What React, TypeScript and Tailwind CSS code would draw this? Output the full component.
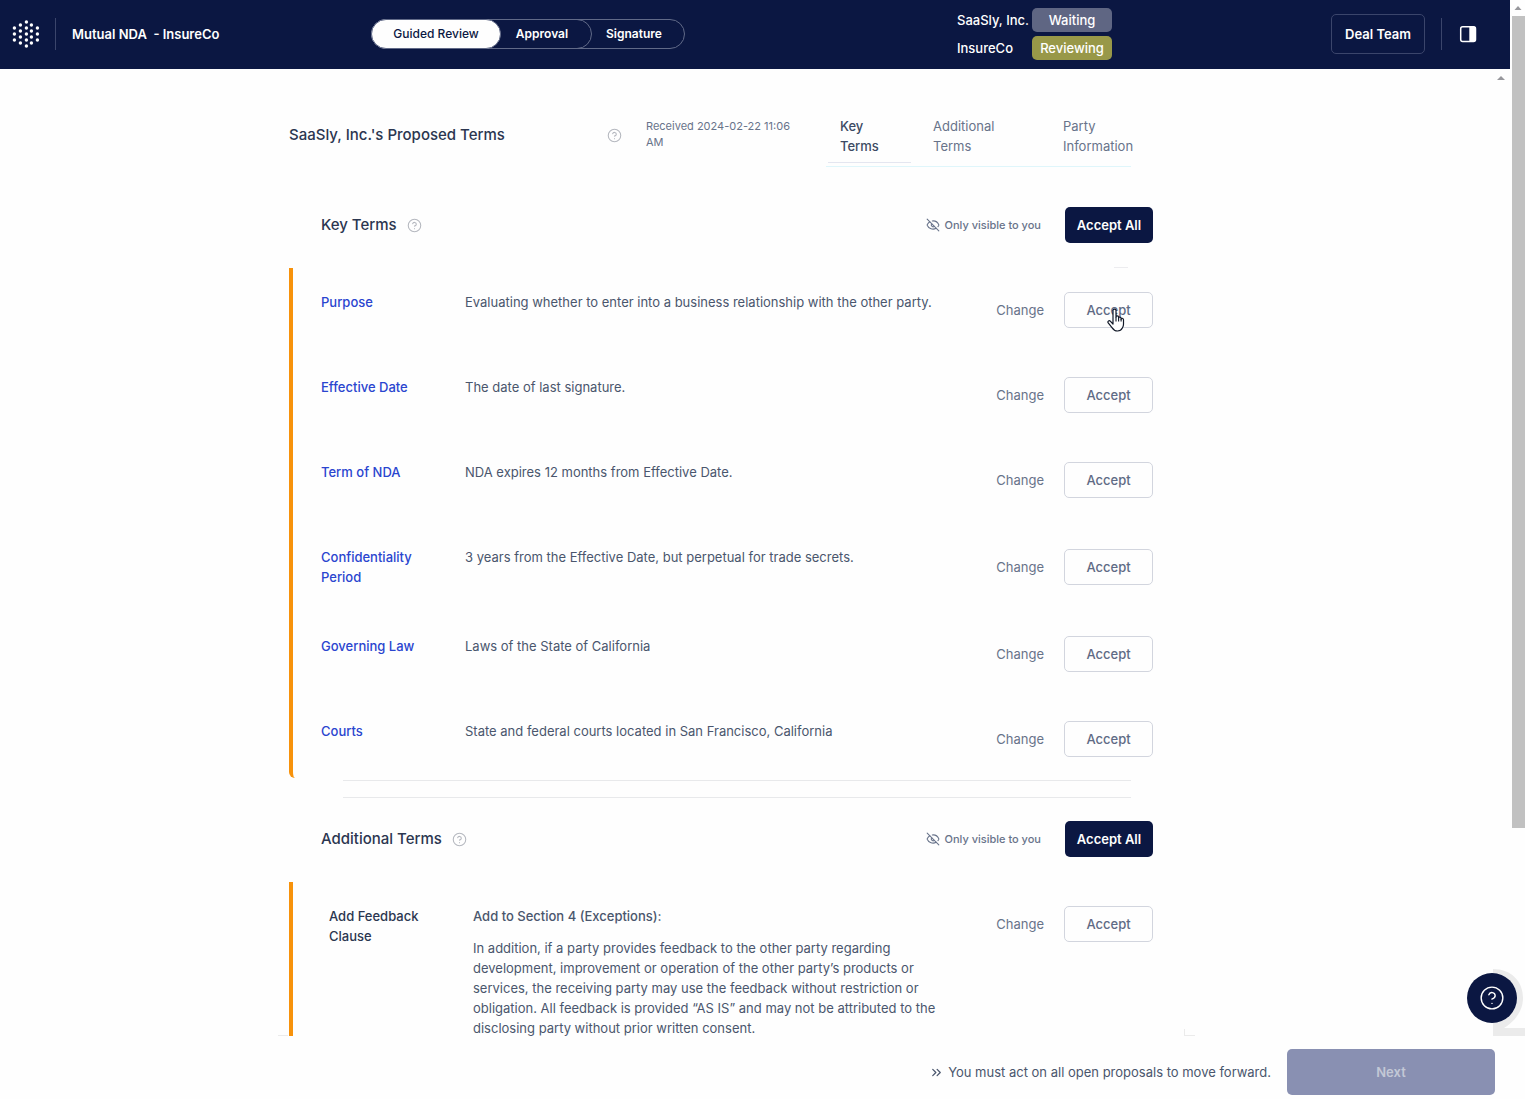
import React from "react";
import { ChevronsRight, CircleHelp, EyeOff } from "lucide-react";

const TERMS = [
  { name: "Purpose", value: "Evaluating whether to enter into a business relationship with the other party." },
  { name: "Effective Date", value: "The date of last signature." },
  { name: "Term of NDA", value: "NDA expires 12 months from Effective Date." },
  { name: "Confidentiality Period", value: "3 years from the Effective Date, but perpetual for trade secrets." },
  { name: "Governing Law", value: "Laws of the State of California" },
  { name: "Courts", value: "State and federal courts located in San Francisco, California" },
];

const LOGO_COLUMNS = [
  { x: 2, ys: [7, 13, 19] },
  { x: 8, ys: [4, 10, 16, 22] },
  { x: 14, ys: [1, 7, 13, 19, 25] },
  { x: 19, ys: [4, 10, 16, 22] },
  { x: 25, ys: [7, 13, 19] },
];

function Logo() {
  return (
    <svg className="h-8 w-7" viewBox="0 -3 28 32" fill="#fff" role="img" aria-label="Home">
      {LOGO_COLUMNS.map((c) => c.ys.map((y) => <circle key={`${c.x}-${y}`} cx={c.x + 0.4} cy={y} r="1.7" />))}
    </svg>
  );
}

function PanelIcon() {
  return (
    <svg className="size-[18px]" viewBox="0 0 18 18" aria-hidden="true">
      <rect x="1.7" y="1.7" width="14.8" height="14.8" rx="2" fill="none" stroke="#fff" strokeWidth="1.5" />
      <path d="M10.300 1.500h4.700a2 2 0 0 1 2 2v11a2 2 0 0 1-2 2h-4.700z" fill="#fff" />
    </svg>
  );
}

function HandCursor() {
  return (
    <svg className="pointer-events-none absolute left-[43px] top-4 h-6 w-[18px]" viewBox="0 0 18 24" aria-hidden="true">
      <path
        d="M6 14V2.600C6 .7 9 .7 9 2.600V9c0-1.500 2.600-1.400 2.600.3V10c0-1.400 2.500-1.300 2.500.4v.8c0-1.400 2.400-1.200 2.400.5v4.600c0 1.800-.5 2.600-1.200 3.800-.8 1.700-2.200 2.900-4.800 2.900-3 0-4.200-1.300-5.500-3.400L1.200 14.900c-1-1.700 1-2.900 2.300-1.500L6 16z"
        fill="#fff"
        stroke="#111827"
        strokeWidth="1.2"
        strokeLinejoin="round"
      />
      <path d="M9 9v4.500M11.600 10v3.500M14.100 11v2.500" stroke="#111827" strokeWidth="1.1" fill="none" />
    </svg>
  );
}

function AcceptRowActions({ name, hovered = false }: { name: string; hovered?: boolean }) {
  return (
    <div className="flex shrink-0 items-center gap-5">
      <button type="button" aria-label={`Change ${name}`} className="text-[13px] leading-5 text-[#68738a]">
        Change
      </button>
      <div className="relative">
        <button
          type="button"
          aria-label={`Accept ${name}`}
          className="h-9 w-[89px] rounded-[5px] border border-[#d2d5de] text-[13px] leading-5 font-medium text-[#5f6b85]"
        >
          Accept
        </button>
        {hovered && (
          <>
            <HandCursor />
            <span className="absolute -top-[25px] left-[50px] h-px w-[14px] bg-[#ececef]" />
          </>
        )}
      </div>
    </div>
  );
}

function SectionHeader({ title }: { title: string }) {
  return (
    <div className="flex h-9 items-center pl-8">
      <h2 className="text-[15px] leading-6 font-medium text-[#2b3650]">{title}</h2>
      <button type="button" aria-label={`About ${title}`} className="ml-[10px] text-[#b5b8bf]">
        <CircleHelp className="size-[15px]" strokeWidth={1.7} />
      </button>
      <span className="ml-auto flex items-center gap-1 text-[11px] leading-4 font-medium text-[#68738a]">
        <EyeOff className="size-[14px]" strokeWidth={1.8} />
        Only visible to you
      </span>
      <button
        type="button"
        className="ml-6 h-9 w-[88px] rounded-[5px] bg-[#0b1742] text-[13px] leading-5 font-semibold text-white"
      >
        Accept All
      </button>
    </div>
  );
}

function Header() {
  return (
    <header className="grid h-[69px] shrink-0 grid-cols-[371fr_586fr_374fr_179fr] items-center bg-[#0b1742] pb-[2px] text-white">
      <div className="flex items-center pl-3">
        <Logo />
        <span className="ml-[15px] h-8 w-px bg-[#3b456b]" />
        <h1 className="ml-4 text-[13px] leading-5 font-semibold whitespace-pre">Mutual NDA  - InsureCo</h1>
      </div>
      <nav aria-label="Steps" className="flex text-xs leading-4 font-semibold">
        <div className="flex h-[30px] rounded-full border border-[#616a88]">
          <div className="-my-px -ml-px flex rounded-full border border-[#616a88]">
            <button
              type="button"
              aria-current="step"
              className="-my-px -ml-px w-[130px] rounded-full border border-[#616a88] bg-[#fefefe] font-medium text-[#0b1742]"
            >
              Guided Review
            </button>
            <button type="button" className="w-[90px] pr-2">Approval</button>
          </div>
          <button type="button" className="w-[92px] pr-2">Signature</button>
        </div>
      </nav>
      <dl className="grid grid-cols-[75px_80px] gap-y-1 text-[13px] leading-6 font-medium">
        <dt className="whitespace-nowrap">SaaSly, Inc.</dt>
        <dd className="rounded-[5px] bg-[#5f6683] text-center">Waiting</dd>
        <dt>InsureCo</dt>
        <dd className="rounded-[5px] bg-[#989848] text-center">Reviewing</dd>
      </dl>
      <div className="flex items-center">
        <button type="button" className="h-10 w-[94px] rounded-[5px] border border-[#3b456b] text-[13px] leading-5 font-semibold">
          Deal Team
        </button>
        <span className="ml-4 h-8 w-px bg-[#3b456b]" />
        <button type="button" aria-label="Toggle side panel" className="ml-[17px]">
          <PanelIcon />
        </button>
      </div>
    </header>
  );
}

function TitleRow() {
  return (
    <div className="flex h-[51px] items-start">
      <h2 className="mt-[7px] text-[15px] leading-6 font-medium text-[#2b3650]">SaaSly, Inc.'s Proposed Terms</h2>
      <button type="button" aria-label="About proposed terms" className="mt-3 ml-auto text-[#b5b8bf]">
        <CircleHelp className="size-[15px]" strokeWidth={1.7} />
      </button>
      <p className="mt-[2px] ml-6 w-[158px] pr-2 text-[11px] leading-4 text-[#68738a]">Received 2024-02-22 11:06 AM</p>
      <nav
        aria-label="Sections"
        className="mr-[22px] ml-[22px] flex h-[51px] w-[305px] items-start border-b border-[#dff6fb] pl-[2px] text-[13px] leading-5 text-[#68738a]"
      >
        <a href="#key-terms" className="h-[47px] w-[83px] shrink-0 border-b border-[#e4e6f0] pr-6 pl-3 font-medium text-[#3c4a63]">
          Key Terms
        </a>
        <a href="#additional-terms" className="ml-[22px] w-[84px] shrink-0">Additional Terms</a>
        <a href="#party-information" className="ml-[46px] w-[76px] shrink-0">Party Information</a>
      </nav>
    </div>
  );
}

function Scrollbar() {
  return (
    <div aria-hidden="true" className="flex w-[15px] shrink-0 flex-col items-end bg-[#fefefe]">
      <svg className="h-4 w-[14px]" viewBox="0 0 14 16">
        <path d="M7 6l3.500 4h-7z" fill="#97979c" />
      </svg>
      <div className="h-[75%] max-h-[812px] w-[13px] bg-[#c1c1c1]" />
    </div>
  );
}

function HelpLauncher() {
  return (
    <div className="absolute right-2 bottom-[76px]">
      <svg className="absolute -top-1 left-[26px] h-[67px] w-8" viewBox="0 0 32 67" fill="#ebebeb" aria-hidden="true">
        <path d="M0 0C18 0 30 12 30 29c0 13-8 23-19 30h21v8H0z" />
      </svg>
      <button
        type="button"
        aria-label="Help"
        className="relative flex size-[50px] items-center justify-center rounded-full bg-[#0b1742] text-white"
      >
        <CircleHelp className="size-[26px]" strokeWidth={1.3} />
      </button>
    </div>
  );
}

export default function App() {
  return (
    <div className="relative flex h-screen overflow-hidden bg-[#fefefe] font-['Inter','Liberation_Sans',sans-serif]">
      <div className="flex min-w-0 flex-1 flex-col">
        <Header />
        <main className="relative min-h-0 flex-1 overflow-hidden pt-[47px] pr-[68px]">
          <svg className="absolute top-[6px] right-[5px] size-2" viewBox="0 0 8 8" aria-hidden="true">
            <path d="M4 1l4 4H0z" fill="#97979c" />
          </svg>
          <div className="mx-auto max-w-[864px]">
            <TitleRow />
            <section id="key-terms" className="mt-10">
              <SectionHeader title="Key Terms" />
              <ul className="mt-[25px] rounded-bl-md border-l-4 border-[#f7920b] pl-7">
                {TERMS.map((t, i) => (
                  <li
                    key={t.name}
                    className="flex items-start border-b border-transparent py-6 last:border-b-0 last:pb-[21px]"
                  >
                    <h3 className="w-36 shrink-0 pr-8 text-[13px] leading-5 font-medium text-[#2a45cf]">{t.name}</h3>
                    <p className="min-w-0 flex-1 text-[13px] leading-5 text-[#4a566d]">{t.value}</p>
                    <div className="self-center">
                      <AcceptRowActions name={t.name} hovered={i === 0} />
                    </div>
                  </li>
                ))}
              </ul>
              <div className="mt-[2px] mr-[22px] ml-[54px] h-[18px] border-y border-[#e8e9eb]" />
            </section>
            <section id="additional-terms" className="mt-[23px]">
              <SectionHeader title="Additional Terms" />
              <div className="mt-[25px] flex items-start border-l-4 border-[#f7920b] py-6 pl-9">
                <h3 className="w-36 shrink-0 pr-8 text-[13px] leading-5 font-medium text-[#2b3650]">Add Feedback Clause</h3>
                <div className="min-w-0 flex-1 pr-11 text-[13px] leading-5 text-[#4a566d]">
                  <h4 className="font-medium">Add to Section 4 (Exceptions):</h4>
                  <p className="mt-3">
                    In addition, if a party provides feedback to the other party regarding development, improvement or
                    operation of the other party’s products or services, the receiving party may use the feedback without
                    restriction or obligation. All feedback is provided “AS IS” and may not be attributed to the
                    disclosing party without prior written consent.
                  </p>
                </div>
                <AcceptRowActions name="feedback clause" />
              </div>
            </section>
          </div>
          <div aria-hidden="true" className="pointer-events-none absolute inset-x-0 bottom-0 pr-[68px]">
            <div className="mx-auto flex max-w-[864px] items-end justify-between">
              <span className="-ml-[11px] h-px w-[10px] bg-[#ebebeb]" />
              <span className="-mr-[42px] h-[7px] w-[11px] border-b border-l border-[#ebebeb]" />
            </div>
          </div>
        </main>
        <footer className="flex h-[63px] shrink-0 items-center justify-end pr-[15px] pt-[9px]">
          <ChevronsRight className="mr-1 size-[15px] text-[#4a566d]" strokeWidth={2} />
          <p className="text-[13px] leading-5 text-[#4a566d]">You must act on all open proposals to move forward.</p>
          <button
            type="button"
            disabled
            className="ml-4 h-[46px] w-[208px] rounded-[5px] bg-[#8990b2] text-[13px] leading-5 font-semibold text-[#c3c8d6]"
          >
            Next
          </button>
        </footer>
      </div>
      <Scrollbar />
      <HelpLauncher />
    </div>
  );
}
